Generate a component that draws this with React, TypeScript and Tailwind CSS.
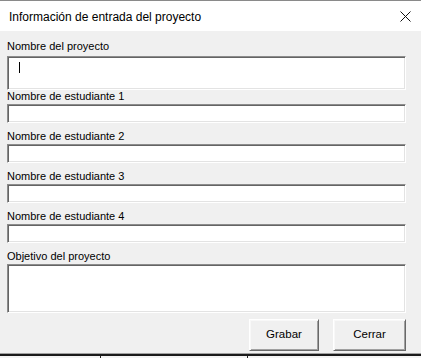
const font = { fontFamily: '"Liberation Sans", Arial, sans-serif' }

function Sunken({ h, cursor }: { h: string; cursor?: boolean }) {
  return (
    <div
      className={`${h} relative bg-white border border-t-[#8c8c8c] border-l-[#8c8c8c] border-r-white border-b-white shadow-[inset_1px_1px_0_#646464,inset_-1px_-1px_0_#e3e3e3]`}
    >
      {cursor && <div className="absolute left-[11px] top-[5px] w-px h-[11px] bg-black" />}
    </div>
  )
}

function Label({ text, cls }: { text: string; cls: string }) {
  return <div className={`h-[14px] leading-[14px] text-[11px] text-black ${cls}`}>{text}</div>
}

function Button({ text, w }: { text: string; w: string }) {
  return (
    <button
      className={`${w} h-[32px] bg-[#f0f0f0] text-[11.5px] text-black border border-t-white border-l-white border-r-[#696969] border-b-[#696969] shadow-[inset_1px_1px_0_#f8f8f8,inset_-1px_-1px_0_#a0a0a0]`}
    >
      {text}
    </button>
  )
}

export default function App() {
  return (
    <div className="w-[421px] h-[358px] bg-[#f0f0f0] flex flex-col overflow-hidden" style={font}>
      <div className="h-px bg-[#8a8a8a]" />
      <div className="h-[30px] bg-white flex items-center justify-between pl-[9px] pr-[10px] pt-[1px]">
        <span className="text-[12px] text-black">Información de entrada del proyecto</span>
        <svg width="11" height="11" viewBox="0 0 11 11" className="mb-[1px]">
          <path d="M0.5 0.5 L10.5 10.5 M10.5 0.5 L0.5 10.5" stroke="#111" strokeWidth="1" fill="none" />
        </svg>
      </div>
      <div className="flex flex-col pl-[7px] pr-[15px] pt-[8px]">
        <Label text="Nombre del proyecto" cls="mb-[3px]" />
        <Sunken h="h-[34px]" cursor />
        <Label text="Nombre de estudiante 1" cls="-mt-px mb-px" />
        <Sunken h="h-[19px]" />
        <Label text="Nombre de estudiante 2" cls="mt-[6px] mb-px" />
        <Sunken h="h-[19px]" />
        <Label text="Nombre de estudiante 3" cls="mt-[6px] mb-px" />
        <Sunken h="h-[19px]" />
        <Label text="Nombre de estudiante 4" cls="mt-[6px] mb-px" />
        <Sunken h="h-[19px]" />
        <Label text="Objetivo del proyecto" cls="mt-[6px] mb-px" />
        <Sunken h="h-[49px]" />
        <div className="flex justify-end gap-[14px] mt-[6px]">
          <Button text="Grabar" w="w-[70px]" />
          <Button text="Cerrar" w="w-[73px]" />
        </div>
      </div>
      <div className="mt-[2px] h-px bg-[#a0a0a0]" />
      <div className="h-[2px] bg-[#1a1a1a]" />
      <div className="flex h-[2px] bg-[#f4f4f4]">
        <div className="w-[101px] border-r border-[#222]" />
        <div className="w-[147px] border-r border-[#222]" />
      </div>
    </div>
  )
}
